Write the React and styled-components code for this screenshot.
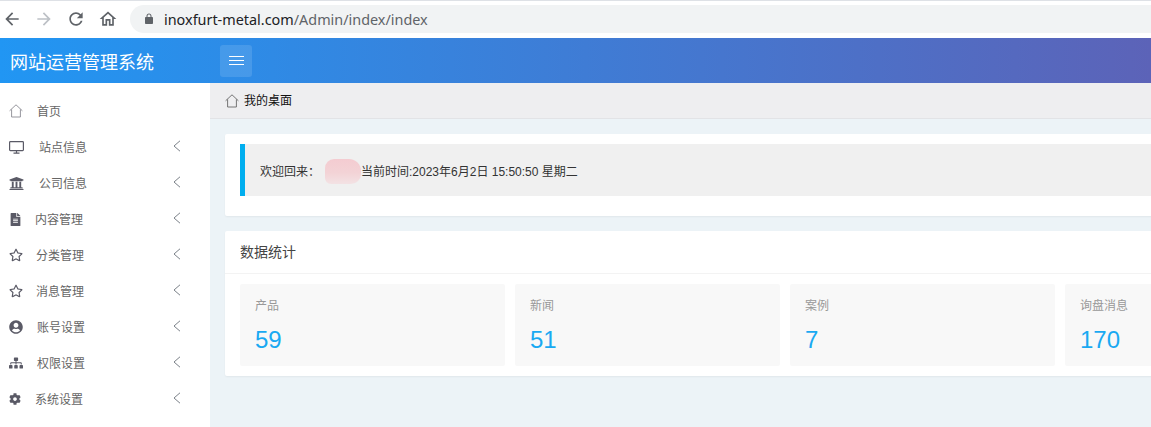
import React from 'react';
import styled, { createGlobalStyle } from 'styled-components';
import { FaUniversity, FaFileAlt, FaRegStar, FaUserCircle, FaSitemap, FaCog } from 'react-icons/fa';

const CJK = `"Liberation Sans", "Noto Sans CJK SC", sans-serif`;

const HomeLine = ({ size = 14 }) => (
  <svg width={size} height={size} viewBox="0 0 14 14" fill="none" stroke="currentColor" strokeWidth="0.9">
    <path d="M0.6 6.8 L7 0.8 L13.4 6.8 M2.6 5.4 V13 H11.4 V5.4" />
  </svg>
);

const Monitor = () => (
  <svg width="15" height="13" viewBox="0 0 15 13" fill="none" stroke="currentColor" strokeWidth="1.2">
    <rect x="0.6" y="0.6" width="13.8" height="9" rx="0.8" />
    <path d="M7.5 9.6 V12 M4.5 12.2 H10.5" />
  </svg>
);

const MENU = [
  { label: '首页', icon: <HomeLine />, iconWidth: 14, gap: 14, light: true },
  { label: '站点信息', icon: <Monitor />, iconWidth: 15, gap: 15, arrow: true },
  { label: '公司信息', icon: <FaUniversity size={15} />, iconWidth: 15, gap: 15, arrow: true },
  { label: '内容管理', icon: <FaFileAlt size={13} />, iconWidth: 13, gap: 13, arrow: true },
  { label: '分类管理', icon: <FaRegStar size={14} />, iconWidth: 14, gap: 13, arrow: true },
  { label: '消息管理', icon: <FaRegStar size={14} />, iconWidth: 14, gap: 13, arrow: true },
  { label: '账号设置', icon: <FaUserCircle size={14} />, iconWidth: 14, gap: 14, arrow: true },
  { label: '权限设置', icon: <FaSitemap size={14} />, iconWidth: 14, gap: 14, arrow: true },
  { label: '系统设置', icon: <FaCog size={12} />, iconWidth: 12, gap: 14, arrow: true }
];

const STATS = [
  { label: '产品', value: 59 },
  { label: '新闻', value: 51 },
  { label: '案例', value: 7 },
  { label: '询盘消息', value: 170 }
];

export default function App() {
  return (
    <Page>
      <GlobalStyle />
      <BrowserBar>
        <NavIcon>
          <path d="M20 11H7.83l5.59-5.59L12 4l-8 8 8 8 1.41-1.41L7.83 13H20v-2z" />
        </NavIcon>
        <NavIcon disabled>
          <path d="M4 11h12.17l-5.59-5.59L12 4l8 8-8 8-1.41-1.41L16.17 13H4v-2z" />
        </NavIcon>
        <NavIcon>
          <path d="M17.65 6.35C16.2 4.9 14.21 4 12 4c-4.42 0-7.99 3.58-7.99 8s3.57 8 7.99 8c3.73 0 6.84-2.55 7.73-6h-2.08c-.82 2.33-3.04 4-5.65 4-3.31 0-6-2.69-6-6s2.69-6 6-6c1.66 0 3.14.69 4.22 1.78L13 11h7V4l-2.35 2.35z" />
        </NavIcon>
        <NavIcon>
          <path d="M12 5.69l5 4.5V18h-2v-6H9v6H7v-7.81l5-4.5M12 3L2 12h3v8h6v-6h2v6h6v-8h3L12 3z" />
        </NavIcon>
        <UrlPill>
          <LockIcon viewBox="0 0 24 24">
            <path d="M18 8h-1V6c0-2.76-2.24-5-5-5S7 3.24 7 6v2H6c-1.1 0-2 .9-2 2v10c0 1.1.9 2 2 2h12c1.1 0 2-.9 2-2V10c0-1.1-.9-2-2-2zM9 8V6c0-1.66 1.34-3 3-3s3 1.34 3 3v2H9z" />
          </LockIcon>
          <UrlHost>inoxfurt-metal.com</UrlHost>/Admin/index/index
        </UrlPill>
      </BrowserBar>

      <Header>
        <Brand>网站运营管理系统</Brand>
        <MenuButton>
          <span />
          <span />
          <span />
        </MenuButton>
      </Header>

      <Body>
        <Sidebar>
          {MENU.map(item => (
            <MenuItem key={item.label}>
              <MenuIcon $w={item.iconWidth} $gap={item.gap} $light={item.light}>{item.icon}</MenuIcon>
              <MenuLabel>{item.label}</MenuLabel>
              {item.arrow && (
                <Chevron viewBox="0 0 8 12" fill="none" stroke="currentColor" strokeWidth="1">
                  <path d="M7 0.8 L1 6 L7 11.2" />
                </Chevron>
              )}
            </MenuItem>
          ))}
        </Sidebar>

        <Main>
          <Breadcrumb>
            <CrumbIcon><HomeLine /></CrumbIcon>
            <span>我的桌面</span>
          </Breadcrumb>
          <Content>
            <Card>
              <Welcome>
                欢迎回来：<NameBlur />当前时间:2023年6月2日 15:50:50 星期二
              </Welcome>
            </Card>
            <Card $flush>
              <CardTitle>数据统计</CardTitle>
              <StatRow>
                {STATS.map(stat => (
                  <StatTile key={stat.label}>
                    <StatLabel>{stat.label}</StatLabel>
                    <StatValue>{stat.value}</StatValue>
                  </StatTile>
                ))}
              </StatRow>
            </Card>
          </Content>
        </Main>
      </Body>
    </Page>
  );
}

const GlobalStyle = createGlobalStyle`
  html, body { margin: 0; padding: 0; background: #fff; }
  * { box-sizing: border-box; }
`;

const Page = styled.div`
  width: 100%;
  height: 100vh;
  overflow: hidden;
  display: flex;
  flex-direction: column;
  font-family: ${CJK};
  font-size: 12px;
`;

const BrowserBar = styled.div`
  height: 38px;
  flex: none;
  display: flex;
  align-items: center;
  padding-left: 2px;
  background: #fff;
  border-top: 1px solid #dee1e6;
  border-bottom: 1px solid #fff;
`;

const NavIcon = styled.svg.attrs({ viewBox: '0 0 24 24', width: 20, height: 20 })`
  flex: none;
  margin-right: 12px;
  fill: ${p => (p.disabled ? '#bdc1c6' : '#5f6368')};
`;

const UrlPill = styled.div`
  flex: 1;
  height: 28px;
  margin-right: -40px;
  padding-left: 13px;
  display: flex;
  align-items: center;
  border-radius: 14px;
  background: #f1f3f4;
  color: #5f6368;
  font-family: "Noto Sans", "Liberation Sans", sans-serif;
  font-size: 14.4px;
`;

const LockIcon = styled.svg`
  width: 12px;
  height: 12px;
  margin-right: 9px;
  fill: #5f6368;
`;

const UrlHost = styled.span`
  color: #202124;
`;

const Header = styled.div`
  height: 45px;
  flex: none;
  display: flex;
  align-items: center;
  background: linear-gradient(90deg, #2196f3 0%, #5c63b8 100%);
`;

const Brand = styled.div`
  width: 220px;
  padding-left: 10px;
  color: #fff;
  font-size: 18px;
  white-space: nowrap;
`;

const MenuButton = styled.div`
  width: 32px;
  height: 32px;
  display: flex;
  flex-direction: column;
  align-items: center;
  justify-content: center;
  gap: 3px;
  border-radius: 3px;
  background: rgba(255, 255, 255, 0.12);

  span {
    display: block;
    width: 15px;
    height: 1px;
    background: #fff;
  }
`;

const Body = styled.div`
  flex: 1;
  display: flex;
  min-height: 0;
`;

const Sidebar = styled.nav`
  width: 210px;
  flex: none;
  padding-top: 10px;
  background: #fff;
`;

const MenuItem = styled.div`
  height: 36px;
  display: flex;
  align-items: center;
  padding: 0 29px 0 9px;
  color: #666;
`;

const MenuIcon = styled.span`
  width: ${p => p.$w}px;
  margin-right: ${p => p.$gap}px;
  flex: none;
  display: flex;
  align-items: center;
  color: ${p => (p.$light ? '#8a8a92' : '#5a5a66')};
`;

const MenuLabel = styled.span`
  flex: 1;
  margin-top: -2px;
`;

const Chevron = styled.svg`
  width: 8px;
  height: 12px;
  flex: none;
  margin-top: -2px;
  color: #7a8088;
`;

const Main = styled.main`
  flex: none;
  width: 1300px;
  display: flex;
  flex-direction: column;
  background: #ecf3f7;
`;

const Breadcrumb = styled.div`
  height: 36px;
  flex: none;
  display: flex;
  align-items: center;
  padding-left: 15px;
  background: #eeeef0;
  border-bottom: 1px solid #e2e3e6;
  color: #111;

  span {
    margin-top: -2px;
  }
`;

const CrumbIcon = styled.div`
  display: flex;
  margin-right: 5px;
  color: #666;
`;

const Content = styled.div`
  padding: 15px 15px 0;
  display: flex;
  flex-direction: column;
  gap: 15px;
`;

const Card = styled.section`
  background: #fff;
  border-radius: 2px;
  box-shadow: 0 1px 2px rgba(0, 0, 0, 0.05);
  padding: ${p => (p.$flush ? '0' : '10px 15px 20px')};
`;

const Welcome = styled.div`
  height: 52px;
  display: flex;
  align-items: center;
  padding-left: 15px;
  background: #f0f0f0;
  border-left: 5px solid #00aeef;
  color: #333;
  white-space: nowrap;
`;

const NameBlur = styled.span`
  display: inline-block;
  width: 36px;
  height: 25px;
  margin: 3px 0 0 5px;
  background: linear-gradient(180deg, #f4ccd1 0%, #f3d3d6 55%, #f3e2e4 100%);
  border-radius: 9px 12px 10px 6px;
  filter: blur(0.6px);
`;

const CardTitle = styled.div`
  height: 43px;
  padding: 0 15px 2px;
  display: flex;
  align-items: center;
  border-bottom: 1px solid #f3f3f3;
  color: #444;
  font-size: 14px;
`;

const StatRow = styled.div`
  display: flex;
  gap: 10px;
  padding: 10px 15px;
`;

const StatTile = styled.div`
  width: 265px;
  height: 82px;
  padding: 14px 15px 0;
  background: #f8f8f8;
  border-radius: 2px;
`;

const StatLabel = styled.div`
  color: #999;
  line-height: 16px;
`;

const StatValue = styled.div`
  margin-top: 12px;
  color: #1aa9f2;
  font-family: "Liberation Sans", Arial, sans-serif;
  font-size: 24px;
  line-height: 28px;
`;
